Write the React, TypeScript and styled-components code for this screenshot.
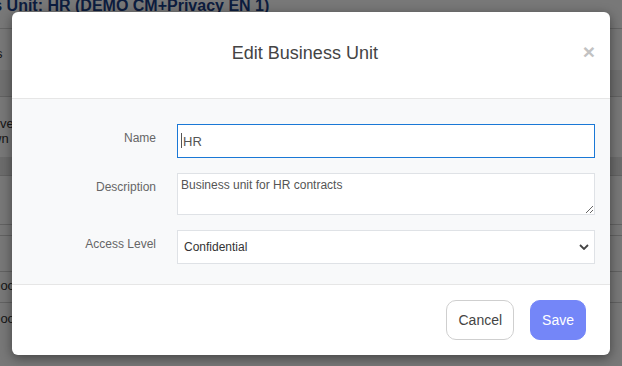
import React from "react";
import styled, { createGlobalStyle } from "styled-components";

const GlobalStyle = createGlobalStyle`
  html, body { margin: 0; padding: 0; }
  body {
    font-family: "Liberation Sans", Arial, sans-serif;
    background: #fff;
    overflow: hidden;
  }
  * { box-sizing: border-box; }
`;

const Page = styled.div`
  position: relative;
  width: 622px;
  height: 366px;
  overflow: hidden;
  background: #fff;
`;

const TitleBar = styled.div`
  height: 32px;
  border-bottom: 1px solid #d4d4d4;
`;

const PageTitle = styled.h1`
  margin: -3px 0 0 -69px;
  font-size: 16px;
  line-height: 18px;
  font-weight: bold;
  color: #1b3f86;
  white-space: nowrap;
`;

const Strip = styled.div<{ $h: number; $bg?: string; $line?: boolean }>`
  height: ${(p) => p.$h}px;
  background: ${(p) => p.$bg || "transparent"};
  border-bottom: ${(p) => (p.$line ? "1px solid #d0d0d0" : "none")};
  display: flex;
  align-items: center;
`;

const CellText = styled.div<{ $shift: number; $dy?: number }>`
  margin-left: ${(p) => p.$shift}px;
  margin-top: ${(p) => p.$dy || 0}px;
  display: flex;
  flex-direction: column;
  white-space: nowrap;
  font-size: 13px;
  line-height: 15px;
  color: #333;
`;

const Overlay = styled.div`
  position: absolute;
  inset: 0;
  background: rgba(0, 0, 0, 0.53);
  padding: 12px;
  display: flex;
  align-items: flex-start;
`;

const Modal = styled.div`
  width: 598px;
  background: #fff;
  border-radius: 6px;
  box-shadow: 0 3px 12px rgba(0, 0, 0, 0.45);
  overflow: hidden;
  display: flex;
  flex-direction: column;
`;

const Header = styled.div`
  height: 87px;
  padding: 31px 15px 0 15px;
  display: flex;
  align-items: flex-start;
  border-bottom: 1px solid #e6e6e6;
`;

const Title = styled.h4`
  flex: 1;
  margin: 0;
  text-align: center;
  font-size: 18px;
  line-height: 21px;
  font-weight: normal;
  color: #444;
`;

const Close = styled.button`
  margin-top: -2px;
  padding: 0;
  border: none;
  background: none;
  font-family: "Liberation Sans", Arial, sans-serif;
  font-size: 21px;
  line-height: 21px;
  font-weight: bold;
  color: #c2c2c2;
  cursor: pointer;
`;

const Body = styled.div`
  background: #f8f9fa;
  padding: 25px 15px 20px 15px;
  display: grid;
  grid-template-columns: 129px 1fr;
  gap: 15px 21px;
  border-bottom: 1px solid #e6e6e6;
`;

const Label = styled.label`
  padding-top: 7px;
  text-align: right;
  font-size: 12px;
  line-height: 14px;
  color: #666;
`;

const Field = styled.div`
  position: relative;
`;

const TextInput = styled.input`
  display: block;
  width: 100%;
  height: 34px;
  padding: 0 5px;
  border: 1px solid #1a78d6;
  border-radius: 0;
  background: #fff;
  font-family: "Liberation Sans", Arial, sans-serif;
  font-size: 13px;
  color: #555;
  outline: none;
`;

const Caret = styled.span`
  position: absolute;
  left: 4px;
  top: 9px;
  width: 1px;
  height: 15px;
  background: #555;
`;

const TextArea = styled.textarea`
  display: block;
  width: 100%;
  height: 42px;
  padding: 4px 3px;
  border: 1px solid #dfe2e6;
  border-radius: 0;
  background: #fff;
  font-family: "Liberation Sans", Arial, sans-serif;
  font-size: 12px;
  line-height: 14px;
  color: #555;
  outline: none;
  resize: vertical;
`;

const Select = styled.select`
  display: block;
  width: 100%;
  height: 34px;
  padding: 0 6px;
  border: 1px solid #dfe2e6;
  border-radius: 0;
  background: #fff;
  font-family: "Liberation Sans", Arial, sans-serif;
  font-size: 12px;
  color: #333;
  appearance: none;
  -webkit-appearance: none;
  outline: none;
`;

const Chevron = styled.svg`
  position: absolute;
  right: 6px;
  top: 14px;
  pointer-events: none;
`;

const Footer = styled.div`
  height: 70px;
  padding: 15px 24px;
  display: flex;
  justify-content: flex-end;
  gap: 16px;
`;

const Button = styled.button<{ $primary?: boolean }>`
  height: 40px;
  padding: 0 11px;
  border-radius: 10px;
  border: 1px solid ${(p) => (p.$primary ? "#7486f8" : "#cfcfcf")};
  background: ${(p) => (p.$primary ? "#7486f8" : "#fff")};
  color: ${(p) => (p.$primary ? "#fff" : "#444")};
  font-family: "Liberation Sans", Arial, sans-serif;
  font-size: 14px;
  cursor: pointer;
`;

export default function App() {
  return (
    <>
      <GlobalStyle />
      <Page>
        <TitleBar>
          <PageTitle>Business Unit: HR (DEMO CM+Privacy EN 1)</PageTitle>
        </TitleBar>
        <Strip $h={41}>
          <CellText $shift={-27} $dy={8}>Units</CellText>
        </Strip>
        <Strip $h={27} $bg="#efefef" $line />
        <Strip $h={60}>
          <CellText $shift={-18} $dy={8}>
            <span>Move</span>
            <span>Own</span>
          </CellText>
        </Strip>
        <Strip $h={19} $bg="#e6e6e6" $line />
        <Strip $h={49} $line />
        <Strip $h={11} $line />
        <Strip $h={36} $line />
        <Strip $h={31} $line>
          <CellText $shift={-9} $dy={-4}>Door</CellText>
        </Strip>
        <Strip $h={36}>
          <CellText $shift={-9} $dy={-6}>Door</CellText>
        </Strip>

        <Overlay>
          <Modal>
            <Header>
              <Title>Edit Business Unit</Title>
              <Close aria-label="Close">×</Close>
            </Header>
            <Body>
              <Label>Name</Label>
              <Field>
                <TextInput defaultValue="HR" readOnly />
                <Caret />
              </Field>
              <Label>Description</Label>
              <Field>
                <TextArea defaultValue="Business unit for HR contracts" readOnly />
              </Field>
              <Label>Access Level</Label>
              <Field>
                <Select defaultValue="confidential">
                  <option value="public">Public</option>
                  <option value="internal">Internal</option>
                  <option value="confidential">Confidential</option>
                </Select>
                <Chevron width="10" height="6" viewBox="0 0 10 6">
                  <path d="M1 1 L5 5 L9 1" fill="none" stroke="#444" strokeWidth="1.8" />
                </Chevron>
              </Field>
            </Body>
            <Footer>
              <Button>Cancel</Button>
              <Button $primary>Save</Button>
            </Footer>
          </Modal>
        </Overlay>
      </Page>
    </>
  );
}
